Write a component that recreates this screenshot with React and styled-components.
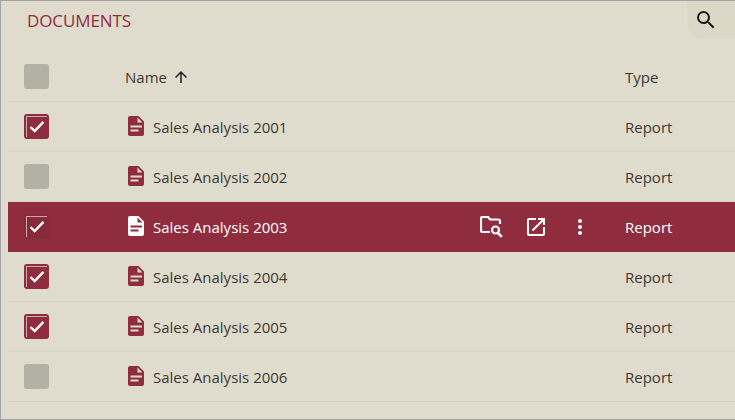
import React from 'react'
import styled, { createGlobalStyle } from 'styled-components'
import { MdSearch, MdArrowUpward, MdMoreVert, MdOpenInNew } from 'react-icons/md'

const GlobalStyle = createGlobalStyle`
  html, body { margin: 0; padding: 0; }
  body { font-family: "Open Sans", "Liberation Sans", sans-serif; }
`

const Frame = styled.div`
  box-sizing: border-box;
  width: 735px;
  height: 420px;
  background: #e0dccd;
  border: 1px solid #a3a3a3;
  border-right: 0;
  overflow: hidden;
  color: #3c3836;
`

const TopBar = styled.div`
  display: flex;
  justify-content: space-between;
  height: 38px;
`

const Title = styled.h1`
  margin: 10px 0 0 26px;
  font-size: 17px;
  line-height: 20px;
  font-weight: 400;
  letter-spacing: -0.1px;
  color: #8f2d3f;
`

const SearchButton = styled.button`
  width: 48px;
  height: 38px;
  padding: 0 0 0 7px;
  display: flex;
  align-items: center;
  border: 0;
  border-bottom-left-radius: 18px;
  background: #dcd8c8;
  color: #1c1a1c;
`

const Table = styled.div`
  margin: 13px 0 0 7px;
`

const Row = styled.div`
  box-sizing: border-box;
  display: grid;
  grid-template-columns: 117px 1fr auto 110px;
  align-items: center;
  height: 50px;
  border-bottom: 1px solid ${p => p.$selected ? '#8f2d3f' : '#d6d3c3'};
  background: ${p => p.$selected ? '#8f2d3f' : 'transparent'};
  color: ${p => p.$selected ? '#ffffff' : 'inherit'};
  font-size: 15px;
`

const CheckCell = styled.div`
  padding-left: 16px;
`

const Checkbox = styled.span`
  position: relative;
  box-sizing: border-box;
  display: flex;
  align-items: center;
  justify-content: center;
  width: 25px;
  height: 25px;
  border-radius: 3px;
  background: ${p => p.$checked ? (p.$onDark ? '#872b3c' : '#8f2d3f') : '#b3b0a4'};
  color: #fff;
  &::before {
    content: '';
    display: ${p => p.$checked ? 'block' : 'none'};
    position: absolute;
    left: 2px;
    top: 2px;
    right: 2px;
    bottom: 2px;
    border-top: 1px solid #c9aca9;
    border-left: 1px solid #c9aca9;
  }
`

const NameCell = styled.div`
  display: flex;
  align-items: center;
  gap: ${p => p.$header ? '5px' : '8px'};
  padding-left: ${p => p.$header ? '0' : '3px'};
`

const SortIcon = styled(MdArrowUpward)`
  font-size: 18px;
  color: #1c1a1c;
`

const FileGlyph = styled.svg`
  width: 17px;
  height: 20px;
  flex: none;
  margin-top: -2px;
  color: ${p => p.$selected ? '#ffffff' : '#8f2d3f'};
`

const Actions = styled.div`
  display: flex;
  align-items: center;
  gap: 20px;
  padding-right: 33px;
  color: #fff;
`

const ActionSlot = styled.span`
  display: flex;
  width: 24px;
  justify-content: center;
  font-size: 24px;
`

const CheckMark = () => (
  <svg width="16" height="13" viewBox="0 0 17 14" fill="none" stroke="currentColor" strokeWidth="2.500">
    <path d="M1.500 7.500l4.500 4.500L15.500 2" />
  </svg>
)

const FileIcon = ({ selected }) => (
  <FileGlyph $selected={selected} viewBox="0 0 17 20">
    <path
      fill="currentColor"
      fillRule="evenodd"
      d="M2 0h8.500L16 5.500V18a2 2 0 0 1-2 2H2a2 2 0 0 1-2-2V2a2 2 0 0 1 2-2zM9.500 1.500V6.500h5zM2.500 9.500v2h11.500v-2zM2.500 13.500v2h8v-2z"
    />
  </FileGlyph>
)

const FolderSearch = () => (
  <svg width="24" height="22" viewBox="0 0 24 22" fill="none" stroke="currentColor" strokeWidth="2.200">
    <path d="M10 16H2.500a1.500 1.500 0 0 1-1.500-1.500V2.500A1.500 1.500 0 0 1 2.500 1h5.600l2 2.500h8.400a1.500 1.500 0 0 1 1.500 1.500v3" />
    <circle cx="15.500" cy="14" r="3.500" />
    <path d="M18 17l3.800 3.800" strokeWidth="2.600" />
  </svg>
)

const rows = [
  { id: 2001, checked: true },
  { id: 2002, checked: false },
  { id: 2003, checked: true, selected: true },
  { id: 2004, checked: true },
  { id: 2005, checked: true },
  { id: 2006, checked: false },
]

export default function App() {
  return (
    <Frame>
      <GlobalStyle />
      <TopBar>
        <Title>DOCUMENTS</Title>
        <SearchButton aria-label="Search"><MdSearch size={24} /></SearchButton>
      </TopBar>
      <Table>
        <Row $header>
          <CheckCell><Checkbox /></CheckCell>
          <NameCell $header>Name <SortIcon /></NameCell>
          <span />
          <span>Type</span>
        </Row>
        {rows.map(row => (
          <Row key={row.id} $selected={row.selected}>
            <CheckCell>
              <Checkbox $checked={row.checked} $onDark={row.selected}>{row.checked && <CheckMark />}</Checkbox>
            </CheckCell>
            <NameCell>
              <FileIcon selected={row.selected} />
              Sales Analysis {row.id}
            </NameCell>
            {row.selected ? (
              <Actions>
                <ActionSlot><FolderSearch /></ActionSlot>
                <ActionSlot><MdOpenInNew /></ActionSlot>
                <ActionSlot><MdMoreVert /></ActionSlot>
              </Actions>
            ) : <span />}
            <span>Report</span>
          </Row>
        ))}
      </Table>
    </Frame>
  )
}
